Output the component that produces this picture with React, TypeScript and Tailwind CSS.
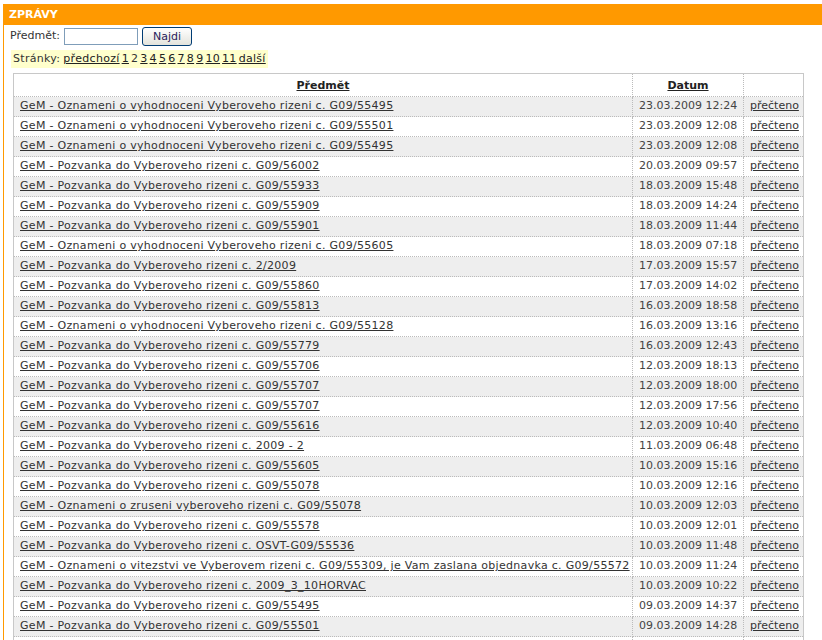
import React from 'react'

type Zprava = {
  predmet: string
  datum: string
}

const zpravy: Zprava[] = [
  { predmet: 'GeM - Oznameni o vyhodnoceni Vyberoveho rizeni c. G09/55495', datum: '23.03.2009 12:24' },
  { predmet: 'GeM - Oznameni o vyhodnoceni Vyberoveho rizeni c. G09/55501', datum: '23.03.2009 12:08' },
  { predmet: 'GeM - Oznameni o vyhodnoceni Vyberoveho rizeni c. G09/55495', datum: '23.03.2009 12:08' },
  { predmet: 'GeM - Pozvanka do Vyberoveho rizeni c. G09/56002', datum: '20.03.2009 09:57' },
  { predmet: 'GeM - Pozvanka do Vyberoveho rizeni c. G09/55933', datum: '18.03.2009 15:48' },
  { predmet: 'GeM - Pozvanka do Vyberoveho rizeni c. G09/55909', datum: '18.03.2009 14:24' },
  { predmet: 'GeM - Pozvanka do Vyberoveho rizeni c. G09/55901', datum: '18.03.2009 11:44' },
  { predmet: 'GeM - Oznameni o vyhodnoceni Vyberoveho rizeni c. G09/55605', datum: '18.03.2009 07:18' },
  { predmet: 'GeM - Pozvanka do Vyberoveho rizeni c. 2/2009', datum: '17.03.2009 15:57' },
  { predmet: 'GeM - Pozvanka do Vyberoveho rizeni c. G09/55860', datum: '17.03.2009 14:02' },
  { predmet: 'GeM - Pozvanka do Vyberoveho rizeni c. G09/55813', datum: '16.03.2009 18:58' },
  { predmet: 'GeM - Oznameni o vyhodnoceni Vyberoveho rizeni c. G09/55128', datum: '16.03.2009 13:16' },
  { predmet: 'GeM - Pozvanka do Vyberoveho rizeni c. G09/55779', datum: '16.03.2009 12:43' },
  { predmet: 'GeM - Pozvanka do Vyberoveho rizeni c. G09/55706', datum: '12.03.2009 18:13' },
  { predmet: 'GeM - Pozvanka do Vyberoveho rizeni c. G09/55707', datum: '12.03.2009 18:00' },
  { predmet: 'GeM - Pozvanka do Vyberoveho rizeni c. G09/55707', datum: '12.03.2009 17:56' },
  { predmet: 'GeM - Pozvanka do Vyberoveho rizeni c. G09/55616', datum: '12.03.2009 10:40' },
  { predmet: 'GeM - Pozvanka do Vyberoveho rizeni c. 2009 - 2', datum: '11.03.2009 06:48' },
  { predmet: 'GeM - Pozvanka do Vyberoveho rizeni c. G09/55605', datum: '10.03.2009 15:16' },
  { predmet: 'GeM - Pozvanka do Vyberoveho rizeni c. G09/55078', datum: '10.03.2009 12:16' },
  { predmet: 'GeM - Oznameni o zruseni vyberoveho rizeni c. G09/55078', datum: '10.03.2009 12:03' },
  { predmet: 'GeM - Pozvanka do Vyberoveho rizeni c. G09/55578', datum: '10.03.2009 12:01' },
  { predmet: 'GeM - Pozvanka do Vyberoveho rizeni c. OSVT-G09/55536', datum: '10.03.2009 11:48' },
  {
    predmet: 'GeM - Oznameni o vitezstvi ve Vyberovem rizeni c. G09/55309, je Vam zaslana objednavka c. G09/55572',
    datum: '10.03.2009 11:24',
  },
  { predmet: 'GeM - Pozvanka do Vyberoveho rizeni c. 2009_3_10HORVAC', datum: '10.03.2009 10:22' },
  { predmet: 'GeM - Pozvanka do Vyberoveho rizeni c. G09/55495', datum: '09.03.2009 14:37' },
  { predmet: 'GeM - Pozvanka do Vyberoveho rizeni c. G09/55501', datum: '09.03.2009 14:28' },
]

const stranky = ['1', '2', '3', '4', '5', '6', '7', '8', '9', '10', '11']

const App: React.FC = () => {
  return (
    <div className="min-h-[640px] bg-white pt-[4px] pl-[3px] font-['DejaVu_Sans','Verdana',sans-serif] text-[11px] text-[#333]">
      <div className="border-l border-[#ff9900] pb-4">
        {/* Header bar */}
        <div className="h-[21px] bg-[#ff9900] pl-[5px] font-bold leading-[21px] text-white">ZPRÁVY</div>

        {/* Search */}
        <div className="flex h-[21px] items-center pl-[6px] pt-[2px]">
          <span>Předmět:</span>
          <input
            type="text"
            className="ml-[4px] h-[17px] w-[74px] border border-[#7f9db9] bg-white px-1 text-[11px] outline-none"
          />
          <button
            type="button"
            className="ml-[4px] h-[19px] w-[50px] rounded-[3px] border border-[#003c74] bg-gradient-to-b from-white to-[#e3e3dc] text-[11px] leading-[17px] text-[#2a1b5c]"
          >
            Najdi
          </button>
        </div>

        {/* Paging */}
        <div className="mt-[4px] ml-[7px] inline-flex h-[18px] items-center gap-[2px] bg-[#ffffcc] px-[2px] tracking-[0.3px]">
          <span className="mr-[1px]">Stránky:</span>
          <a href="#" className="text-[#222] underline">
            předchozí
          </a>
          {stranky.map((s) =>
            s === '2' ? (
              <span key={s}>{s}</span>
            ) : (
              <a key={s} href="#" className="text-[#222] underline">
                {s}
              </a>
            )
          )}
          <a href="#" className="text-[#222] underline">
            další
          </a>
        </div>

        {/* Messages table */}
        <table className="mt-[5px] ml-[9px] w-[791px] border-collapse border border-[#c8c8c8]">
          <thead>
            <tr className="h-[23px]">
              <th className="border border-dotted border-[#bbb] pt-[2px] text-center font-bold">
                <a href="#" className="text-[#222] underline">
                  Předmět
                </a>
              </th>
              <th className="w-[111px] border border-dotted border-[#bbb] pt-[2px] text-center font-bold">
                <a href="#" className="text-[#222] underline">
                  Datum
                </a>
              </th>
              <th className="w-[60px] border border-dotted border-[#bbb]"></th>
            </tr>
          </thead>
          <tbody>
            {zpravy.map((z, i) => (
              <tr key={i} className={i % 2 === 0 ? 'h-[20px] bg-[#eeeeee]' : 'h-[20px] bg-white'}>
                <td className="border border-dotted border-[#bbb] pl-[6px] whitespace-nowrap">
                  <a href="#" className="tracking-[0.3px] text-[#333] underline">
                    {z.predmet}
                  </a>
                </td>
                <td className="border border-dotted border-[#bbb] pl-[6px] whitespace-nowrap text-[#444]">{z.datum}</td>
                <td className="border border-dotted border-[#bbb] pl-[6px] whitespace-nowrap">
                  <a href="#" className="text-[#333] underline">
                    přečteno
                  </a>
                </td>
              </tr>
            ))}
            <tr className="h-[20px] bg-white">
              <td className="border border-dotted border-[#bbb]"></td>
              <td className="border border-dotted border-[#bbb]"></td>
              <td className="border border-dotted border-[#bbb]"></td>
            </tr>
          </tbody>
        </table>
      </div>
    </div>
  )
}

export default App
